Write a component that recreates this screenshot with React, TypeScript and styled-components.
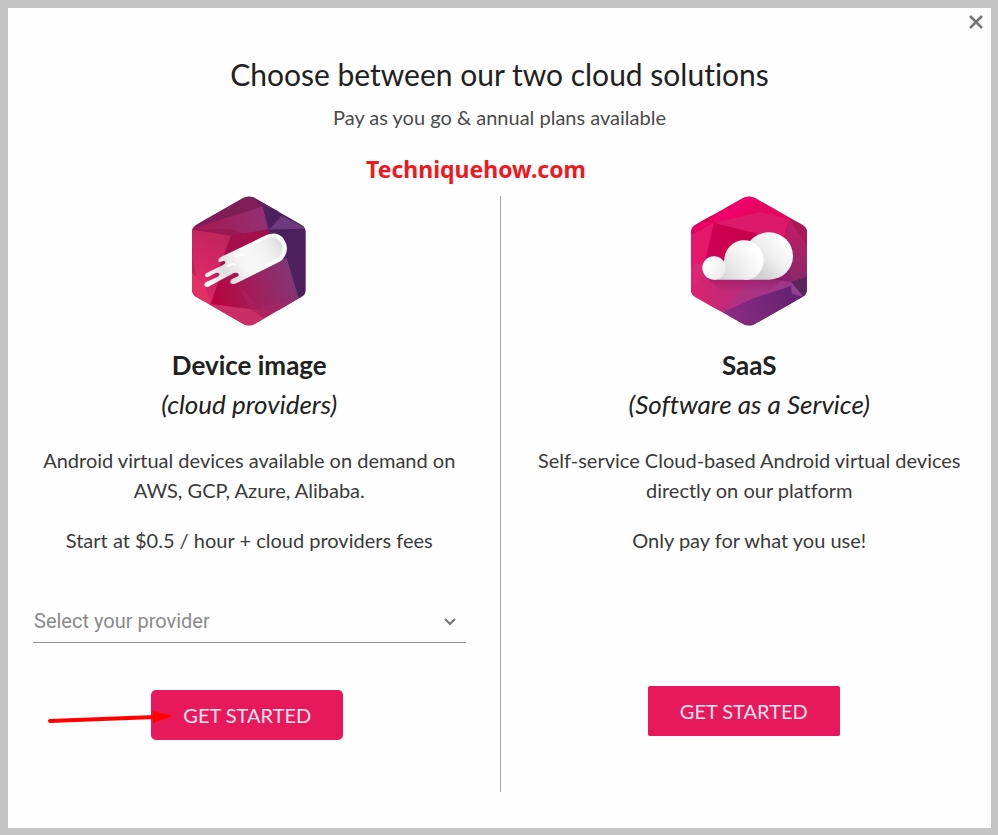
import React from "react";
import styled, { createGlobalStyle } from "styled-components";

const GlobalStyle = createGlobalStyle`
  * { box-sizing: border-box; }
  body {
    margin: 0;
    background: #c3c3c3;
    font-family: Lato, "Open Sans", sans-serif;
    font-variant-ligatures: none;
    color: #212121;
  }
  h1, h2, p { margin: 0; }
`;

const Backdrop = styled.div`
  min-height: 100vh;
  padding: 8px 7px 7px 8px;
  display: flex;
`;

const Dialog = styled.main`
  position: relative;
  flex: 1;
  background: #fefefe;
  padding-bottom: 36px;
  display: flex;
  flex-direction: column;
`;

const CloseButton = styled.button`
  position: absolute;
  top: 4px;
  right: 5px;
  width: 20px;
  height: 20px;
  padding: 0;
  border: 0;
  background: none;
  color: #757575;
  cursor: pointer;
  svg { display: block; }
`;

const Header = styled.header`
  height: 188px;
  padding-top: 46px;
  text-align: center;
`;

const Title = styled.h1`
  font-size: 30px;
  line-height: 40px;
  font-weight: 400;
`;

const Subtitle = styled.p`
  margin-top: 8px;
  font-size: 20px;
  line-height: 30px;
  color: #4a4a4a;
`;

const Watermark = styled.span`
  position: absolute;
  top: 144px;
  left: 358px;
  font: 700 23px/34px "Noto Sans", "Open Sans", sans-serif;
  color: #f01820;
`;

const Plans = styled.div`
  flex: 1;
  display: grid;
  grid-template-columns: 1fr 1fr;
`;

const Plan = styled.section<{ $divided?: boolean }>`
  display: flex;
  flex-direction: column;
  align-items: center;
  text-align: center;
  padding: ${(p) => (p.$divided ? "0 25px 0 32px" : "0 34px 0 25px")};
  border-left: ${(p) => (p.$divided ? "1px solid #a3a3a3" : "0")};
`;

const PlanName = styled.h2`
  margin-top: 20px;
  font-size: 26px;
  line-height: 38px;
  font-weight: 700;
`;

const PlanKind = styled.p`
  font-size: 26px;
  line-height: 40px;
  font-style: italic;
`;

const PlanBody = styled.div`
  height: 176px;
  padding-top: 21px;
  display: flex;
  flex-direction: column;
  gap: 20px;
`;

const Copy = styled.p`
  font-size: 20px;
  line-height: 30px;
  color: #3a3a3a;
`;

const SelectField = styled.label`
  position: relative;
  width: 100%;
  color: #8a8a8a;
  svg { position: absolute; right: 9px; top: 12px; pointer-events: none; }
`;

const ProviderSelect = styled.select`
  display: block;
  appearance: none;
  width: 100%;
  height: 43px;
  padding: 0 30px 0 1px;
  border: 0;
  border-bottom: 1px solid #949494;
  border-radius: 0;
  background: transparent;
  color: inherit;
  font: 400 20px/30px Roboto, sans-serif;
`;

const Actions = styled.div<{ $gap: number; $inset: number }>`
  position: relative;
  width: 100%;
  margin-top: ${(p) => p.$gap}px;
  padding-right: ${(p) => p.$inset}px;
  display: flex;
  justify-content: center;
`;

const StartButton = styled.button<{ $radius: number }>`
  width: 192px;
  height: 50px;
  padding: 0;
  border: 0;
  border-radius: ${(p) => p.$radius}px;
  background: #e8185d;
  color: #fbe6ed;
  font: 400 20px/30px Lato, sans-serif;
  cursor: pointer;
`;

const Pointer = styled.svg`
  position: absolute;
  left: 14px;
  top: 17px;
  pointer-events: none;
`;

const HEX =
  "M190 25Q207 16 224 25L364 105Q377 113 377 127V300Q377 314 364 322L224 403Q207 412 190 403L49 322Q36 314 36 300V127Q36 113 49 105Z";

function CometIcon() {
  return (
    <svg width="116" height="130" viewBox="33 19 348 390" aria-hidden="true">
      <defs>
        <clipPath id="cometHex"><path d={HEX} /></clipPath>
        <linearGradient id="cometBase" gradientUnits="userSpaceOnUse" x1="50" y1="330" x2="340" y2="100">
          <stop offset="0" stopColor="#e52a65" /><stop offset=".5" stopColor="#99205e" /><stop offset="1" stopColor="#48205f" />
        </linearGradient>
        <linearGradient id="cometBand" gradientUnits="userSpaceOnUse" x1="50" y1="120" x2="265" y2="90">
          <stop offset="0" stopColor="#a91851" /><stop offset="1" stopColor="#913074" />
        </linearGradient>
        <linearGradient id="cometLeft" gradientUnits="userSpaceOnUse" x1="50" y1="300" x2="150" y2="130">
          <stop offset="0" stopColor="#e62b68" /><stop offset="1" stopColor="#bc235d" />
        </linearGradient>
        <linearGradient id="cometLow" gradientUnits="userSpaceOnUse" x1="110" y1="330" x2="340" y2="240">
          <stop offset="0" stopColor="#b8053f" /><stop offset=".5" stopColor="#9f205d" /><stop offset="1" stopColor="#823778" />
        </linearGradient>
        <linearGradient id="cometTail" gradientUnits="userSpaceOnUse" x1="75" y1="285" x2="300" y2="155">
          <stop offset="0" stopColor="#fff" /><stop offset=".28" stopColor="#dedede" /><stop offset=".5" stopColor="#f6f6f6" /><stop offset="1" stopColor="#fff" />
        </linearGradient>
        <linearGradient id="cometHead" gradientUnits="userSpaceOnUse" x1="190" y1="220" x2="300" y2="155">
          <stop offset="0" stopColor="#f7f7f7" stopOpacity="0" /><stop offset="1" stopColor="#dedede" />
        </linearGradient>
      </defs>
      <g clipPath="url(#cometHex)">
        <path fill="url(#cometBase)" d="M30 10H390V420H30Z" />
        <path fill="#801d58" d="M30 122L80 80L206 10L248 50Z" />
        <path fill="url(#cometBand)" d="M30 119L248 50L265 119L153 138Z" />
        <path fill="#9a1954" d="M30 119L153 138L192 132L150 118Z" />
        <path fill="#642064" d="M200 10L300 60L267 119L248 50Z" />
        <path fill="#4d205f" d="M248 50L290 62L305 82L267 119Z" />
        <path fill="#6d397f" d="M305 78L380 117L267 120Z" />
        <path fill="#4b205c" d="M267 120L380 117V310L355 326L302 190Z" />
        <path fill="url(#cometLeft)" d="M30 119L153 138L130 210L75 292L48 265Z" />
        <path fill="#ca1e59" d="M30 175L50 265L30 242Z" />
        <path fill="#e22f65" d="M30 242L75 292L92 344L30 318Z" />
        <path fill="#a50f4c" d="M153 138L265 120L272 160L110 255Z" />
        <path fill="url(#cometLow)" d="M120 260L320 205L356 326L300 360L208 358L92 344Z" />
        <path fill="#ad2766" d="M174 283L260 382L350 330L208 358Z" opacity=".4" />
        <path fill="#cd2d66" d="M92 344L210 358L252 387L206 415L80 345Z" />
      </g>
      <path fill="url(#cometTail)" d="M258 137Q289 123 311 147Q333 181 306 211Q301 216 291 220L169 281Q157 286 151 279Q150 270 161 266L174 260Q179 255 173 250Q165 247 156 253L85 291Q73 294 73 283Q75 277 85 274L112 262Q120 258 118 252Q113 247 102 252L85 261Q75 265 75 257Q76 251 84 248L128 227Q138 221 136 216Q132 212 124 216Q113 220 115 210Q118 204 127 200Z" />
      <path fill="url(#cometHead)" d="M187 183L262 145Q286 137 302 157Q316 184 294 205L185 260Z" />
      <path d="M144 229Q159 219 166 225M168 201Q181 191 189 196" fill="none" stroke="#fff" strokeWidth="6" strokeLinecap="round" />
    </svg>
  );
}

function CloudIcon() {
  return (
    <svg width="116" height="130" viewBox="33 19 348 390" aria-hidden="true">
      <defs>
        <clipPath id="cloudHex"><path transform="translate(-4 0) scale(1.02 1)" d={HEX} /></clipPath>
        <linearGradient id="cloudBase" gradientUnits="userSpaceOnUse" x1="100" y1="80" x2="300" y2="360">
          <stop offset="0" stopColor="#e4005b" /><stop offset=".5" stopColor="#c21362" /><stop offset="1" stopColor="#6b2276" />
        </linearGradient>
        <linearGradient id="cloudLow" gradientUnits="userSpaceOnUse" x1="50" y1="300" x2="330" y2="290">
          <stop offset="0" stopColor="#d82371" /><stop offset="1" stopColor="#963686" />
        </linearGradient>
        <linearGradient id="cloudBottom" gradientUnits="userSpaceOnUse" x1="140" y1="370" x2="330" y2="320">
          <stop offset="0" stopColor="#8b2c82" /><stop offset="1" stopColor="#682272" />
        </linearGradient>
        <linearGradient id="cloudRight" gradientUnits="userSpaceOnUse" x1="340" y1="90" x2="350" y2="270">
          <stop offset="0" stopColor="#c51b67" /><stop offset="1" stopColor="#8c2868" />
        </linearGradient>
        <linearGradient id="puffLarge" gradientUnits="userSpaceOnUse" x1="225" y1="240" x2="320" y2="150">
          <stop offset="0" stopColor="#cfcfcf" /><stop offset=".5" stopColor="#f0f0f0" /><stop offset="1" stopColor="#fff" />
        </linearGradient>
        <linearGradient id="puffMedium" gradientUnits="userSpaceOnUse" x1="110" y1="260" x2="225" y2="180">
          <stop offset="0" stopColor="#d2d2d2" /><stop offset=".5" stopColor="#ededed" /><stop offset="1" stopColor="#fff" />
        </linearGradient>
        <linearGradient id="puffSmall" gradientUnits="userSpaceOnUse" x1="75" y1="220" x2="130" y2="245">
          <stop offset="0" stopColor="#fff" /><stop offset="1" stopColor="#ececec" />
        </linearGradient>
        <linearGradient id="cloudShade" x1="0" y1="0" x2="0" y2="1">
          <stop offset="0" stopColor="#8d155c" stopOpacity=".55" /><stop offset="1" stopColor="#8d155c" stopOpacity="0" />
        </linearGradient>
      </defs>
      <g clipPath="url(#cloudHex)">
        <path fill="url(#cloudBase)" d="M30 10H390V420H30Z" />
        <path fill="#f0006a" d="M30 125L206 10L240 30L175 82L102 100Z" />
        <path fill="#d60052" d="M55 98L90 77L104 99Z" />
        <path fill="#e5065f" d="M240 30L330 87L315 125L102 100L175 82Z" />
        <path fill="#c9004b" d="M102 99L235 132L205 160H130Z" />
        <path fill="#dc1a69" d="M102 99L240 67L326 88L310 155L235 132Z" />
        <path fill="#e5176b" d="M30 137L102 99L75 220L30 225Z" />
        <path fill="#cc0050" d="M102 99L180 151L132 210L78 205Z" />
        <path fill="url(#cloudRight)" d="M327 86L385 120V263L333 276L315 155Z" />
        <path fill="#a61955" d="M327 86L385 118V174Z" />
        <path fill="#dc2673" d="M30 225L75 219L130 366L30 330Z" />
        <path fill="url(#cloudLow)" d="M30 303L78 245L333 276V309L130 367L90 350Z" />
        <path fill="#a83786" d="M200 276H333V290L130 367Z" opacity=".55" />
        <path fill="url(#cloudBottom)" d="M130 367L220 326L333 289L370 320L206 420Z" />
        <path fill="#5b2560" d="M333 276L385 260V325L365 316Z" />
        <path fill="#914092" d="M333 276L370 321L335 312Z" />
        <path fill="url(#cloudShade)" d="M82 265H310L270 304H120Z" />
      </g>
      <path fill="url(#puffLarge)" d="M192 270V180Q218 128 268 128A71 71 0 0 1 268 270Z" />
      <path fill="url(#puffMedium)" d="M102 270L133 211A59 59 0 0 1 251 211A59 59 0 0 1 206 270Z" />
      <circle cx="102" cy="235" r="35" fill="url(#puffSmall)" />
    </svg>
  );
}

export default function App() {
  return (
    <>
      <GlobalStyle />
      <Backdrop>
        <Dialog>
          <CloseButton type="button" aria-label="Close">
            <svg width="20" height="20" viewBox="0 0 20 20" fill="none" stroke="currentColor" strokeWidth="2.5">
              <path d="M4 4L16 16M16 4L4 16" />
            </svg>
          </CloseButton>
          <Header>
            <Title>Choose between our two cloud solutions</Title>
            <Subtitle>Pay as you go &amp; annual plans available</Subtitle>
            <Watermark>Techniquehow.com</Watermark>
          </Header>
          <Plans>
            <Plan>
              <CometIcon />
              <PlanName>Device image</PlanName>
              <PlanKind>(cloud providers)</PlanKind>
              <PlanBody>
                <Copy>Android virtual devices available on demand on AWS, GCP, Azure, Alibaba.</Copy>
                <Copy>Start at $0.5 / hour + cloud providers fees</Copy>
              </PlanBody>
              <SelectField>
                <ProviderSelect aria-label="Select your provider" defaultValue="">
                  <option value="">Select your provider</option>
                  <option>AWS</option>
                  <option>GCP</option>
                  <option>Azure</option>
                  <option>Alibaba</option>
                </ProviderSelect>
                <svg width="14" height="20" viewBox="0 0 14 20" fill="none" stroke="#757575" strokeWidth="2">
                  <path d="M2 7L7 12L12 7" />
                </svg>
              </SelectField>
              <Actions $gap={47} $inset={4}>
                <StartButton type="button" $radius={5}>GET STARTED</StartButton>
                <Pointer width="128" height="20" viewBox="0 0 128 20" fill="#f00" aria-hidden="true">
                  <path d="M3 14L108 10" stroke="#f00" strokeWidth="4" strokeLinecap="round" />
                  <path d="M106 4L126 9L106 16Z" />
                </Pointer>
              </Actions>
            </Plan>
            <Plan $divided>
              <CloudIcon />
              <PlanName>SaaS</PlanName>
              <PlanKind>(Software as a Service)</PlanKind>
              <PlanBody>
                <Copy>Self-service Cloud-based Android virtual devices directly on our platform</Copy>
                <Copy>Only pay for what you use!</Copy>
              </PlanBody>
              <Actions $gap={86} $inset={11}>
                <StartButton type="button" $radius={2}>GET STARTED</StartButton>
              </Actions>
            </Plan>
          </Plans>
        </Dialog>
      </Backdrop>
    </>
  );
}
